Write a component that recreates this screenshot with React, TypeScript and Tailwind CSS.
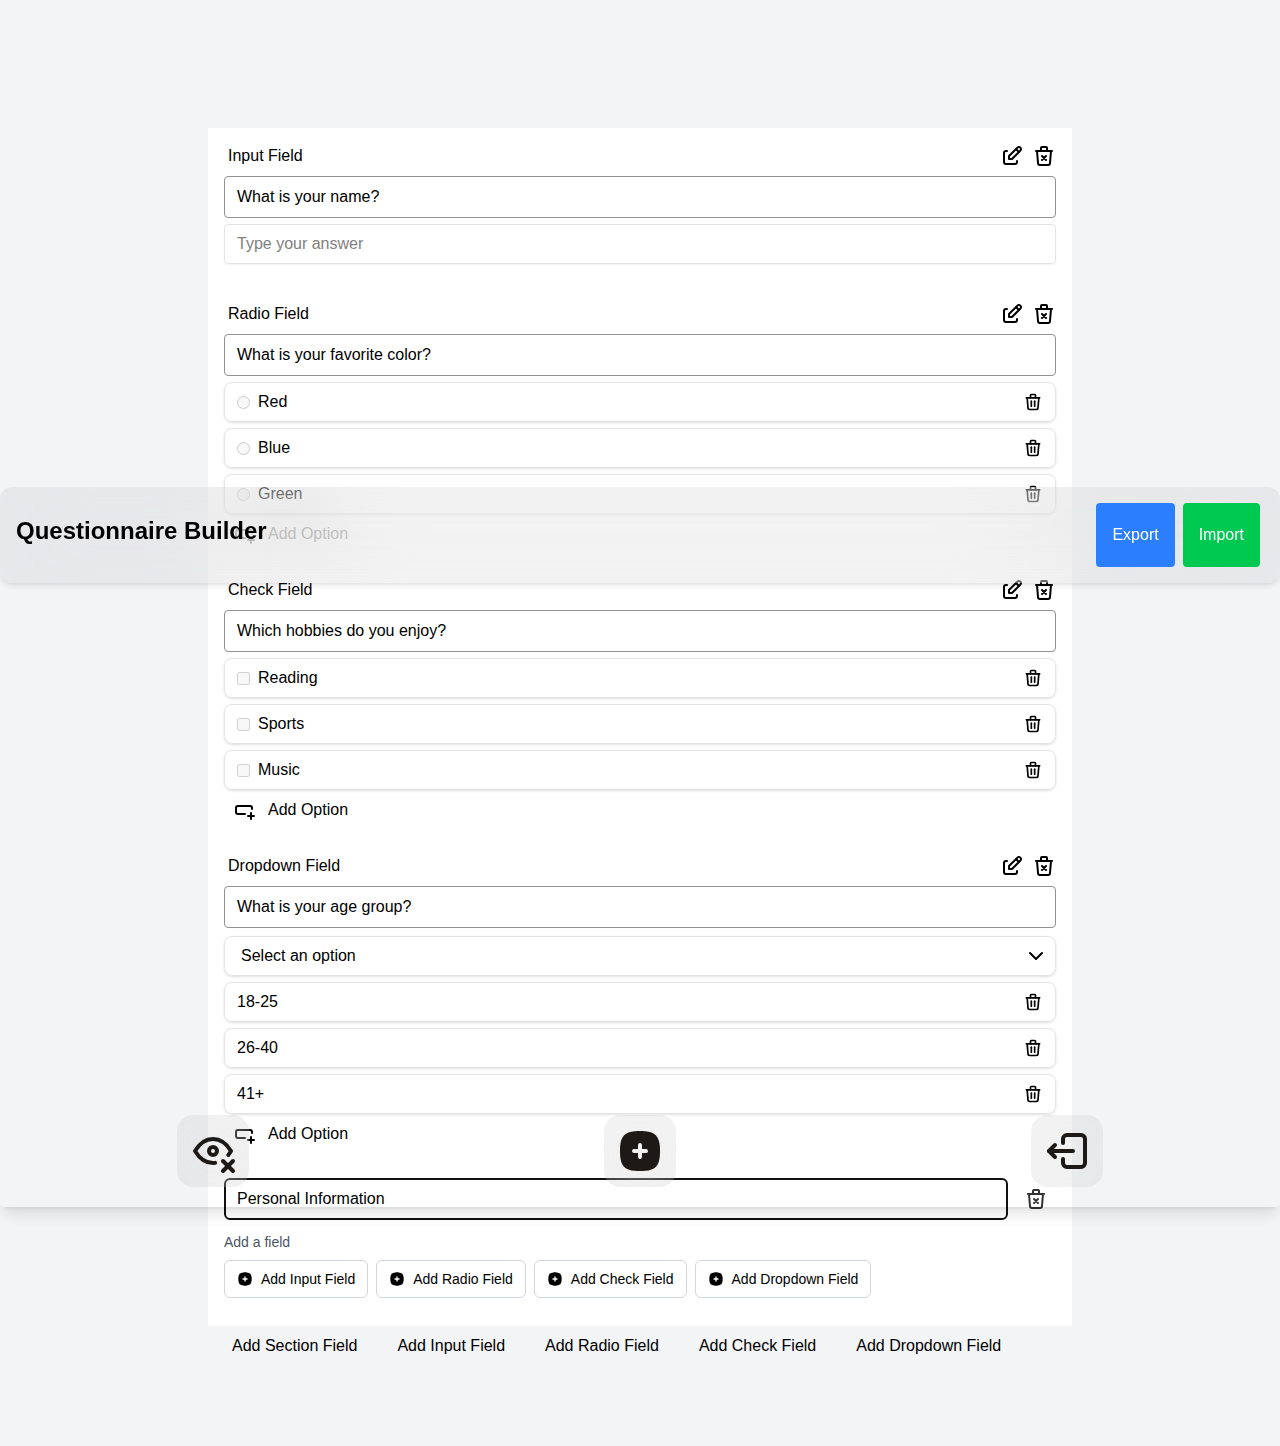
import React from "react";
import {
  TbEdit,
  TbTrashX,
  TbTrash,
  TbSquareRoundedPlusFilled,
  TbEyeX,
  TbLogout2,
  TbChevronDown,
} from "react-icons/tb";

function AddOptionIcon() {
  return (
    <svg width="24" height="24" viewBox="0 0 24 24" fill="none" stroke="currentColor" strokeWidth="2" strokeLinecap="round" strokeLinejoin="round">
      <path d="M12 16H5a2 2 0 0 1-2-2v-4a2 2 0 0 1 2-2h12a2 2 0 0 1 2 2v1" />
      <path d="M15 18h6M18 15v6" />
    </svg>
  );
}

function FieldHeader({ label }: { label: string }) {
  return (
    <div className="flex h-6 items-center justify-between pl-1">
      <span>{label}</span>
      <div className="flex gap-2">
        <TbEdit size={24} />
        <TbTrashX size={24} />
      </div>
    </div>
  );
}

function Question({ value }: { value: string }) {
  return (
    <div className="mt-2 flex h-[42px] items-center rounded border border-[#929292] px-3">{value}</div>
  );
}

function Option({ label, type }: { label: string; type?: "radio" | "checkbox" }) {
  return (
    <div className="flex h-10 items-center justify-between rounded-lg border border-[#e5e5e5] px-3 shadow-sm">
      <div className="flex items-center gap-2">
        {type && <input type={type} disabled className="mt-px h-[13px] w-[13px]" />}
        <span>{label}</span>
      </div>
      <TbTrash size={20} />
    </div>
  );
}

function AddOption({ faded }: { faded?: boolean }) {
  return (
    <div className={faded ? "mt-2 flex h-6 items-center pl-[9px] opacity-60" : "mt-2 flex h-6 items-center pl-[9px]"}>
      <AddOptionIcon />
      <span className="ml-[11px]">Add Option</span>
    </div>
  );
}

function ChoiceField({
  label,
  question,
  options,
  type,
  faded,
}: {
  label: string;
  question: string;
  options: string[];
  type: "radio" | "checkbox";
  faded?: boolean;
}) {
  return (
    <section className="mb-8">
      <FieldHeader label={label} />
      <Question value={question} />
      <div className="mt-1.5 flex flex-col gap-1.5">
        {options.map((o) => (
          <Option key={o} label={o} type={type} />
        ))}
      </div>
      <AddOption faded={faded} />
    </section>
  );
}

function FloatingButton({ children }: { children: React.ReactNode }) {
  return (
    <div className="relative flex h-[72px] w-[72px] items-center justify-center">
      <div className="absolute inset-0 rounded-2xl bg-black/6 opacity-84 backdrop-blur-2xl" />
      <div className="relative text-[#1c1917]">{children}</div>
    </div>
  );
}

function Overlay() {
  return (
    <div className="absolute inset-x-0 top-[487px] flex h-[720px] flex-col justify-between rounded-sm pb-5 shadow-lg">
      <header className="relative h-24">
        <div className="absolute inset-0 rounded-xl bg-black/6 opacity-84 shadow-md backdrop-blur-2xl" />
        <div className="relative flex h-24 justify-between py-4 pr-5 pl-4">
          <h1 className="pt-3 text-2xl font-bold">Questionnaire Builder</h1>
          <div className="flex gap-2 text-white">
            <button className="rounded bg-blue-500 px-4">Export</button>
            <button className="rounded bg-green-500 px-4">Import</button>
          </div>
        </div>
      </header>
      <div className="flex justify-between px-[177px]">
        <FloatingButton>
          <TbEyeX size={48} />
        </FloatingButton>
        <FloatingButton>
          <TbSquareRoundedPlusFilled size={48} />
        </FloatingButton>
        <FloatingButton>
          <TbLogout2 size={48} />
        </FloatingButton>
      </div>
    </div>
  );
}

export default function App() {
  return (
    <div className="relative h-[1446px] bg-gray-100 pt-32 font-['Liberation_Sans',sans-serif] text-base text-black">
      <main className="mx-auto h-[1198px] w-[864px] bg-white p-4">
        <section className="mb-[38px]">
          <FieldHeader label="Input Field" />
          <Question value="What is your name?" />
          <div className="mt-1.5 flex h-10 items-center rounded border border-[#e5e5e5] px-3 text-[#808080] shadow-xs">
            Type your answer
          </div>
        </section>
        <ChoiceField type="radio" label="Radio Field" question="What is your favorite color?" options={["Red", "Blue", "Green"]} faded />
        <ChoiceField type="checkbox" label="Check Field" question="Which hobbies do you enjoy?" options={["Reading", "Sports", "Music"]} />
        <section className="mb-8">
          <FieldHeader label="Dropdown Field" />
          <Question value="What is your age group?" />
          <div className="mt-2 flex h-10 items-center justify-between rounded-lg border border-[#e5e5e5] pr-[7px] pl-4 shadow-sm">
            Select an option
            <TbChevronDown size={24} />
          </div>
          <div className="mt-1.5 flex flex-col gap-1.5">
            {["18-25", "26-40", "41+"].map((o) => (
              <Option key={o} label={o} />
            ))}
          </div>
          <AddOption />
        </section>
        <section>
          <div className="flex items-center">
            <div className="flex h-[42px] w-[784px] items-center rounded-md border-2 border-[#111111] px-[11px]">
              Personal Information
            </div>
            <TbTrashX size={24} className="ml-4 opacity-80" />
          </div>
          <p className="mt-3 text-sm text-gray-600">Add a field</p>
          <div className="mt-2 flex gap-2 text-sm">
            {["Add Input Field", "Add Radio Field", "Add Check Field", "Add Dropdown Field"].map((t) => (
              <button key={t} className="flex h-[38px] items-center gap-2 rounded-md border border-gray-300 px-3">
                <TbSquareRoundedPlusFilled size={16} />
                {t}
              </button>
            ))}
          </div>
        </section>
      </main>
      <nav className="mx-auto flex w-[864px] gap-10 pt-2 pl-6">
        {["Add Section Field", "Add Input Field", "Add Radio Field", "Add Check Field", "Add Dropdown Field"].map((t) => (
          <span key={t}>{t}</span>
        ))}
      </nav>
      <Overlay />
    </div>
  );
}
